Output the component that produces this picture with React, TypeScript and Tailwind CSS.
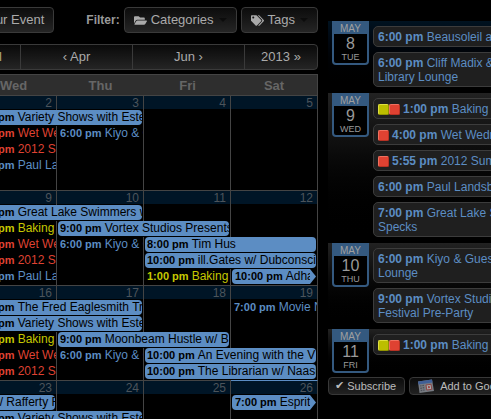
import React from "react";
import { FaFolderOpen, FaTags } from "react-icons/fa";

type Kind = "bar" | "arrow" | "blue" | "red" | "yellow";
type CalendarEvent = { time?: string; title: string; kind: Kind; span?: number };
type Week = { days: number[]; rows: (CalendarEvent | null)[][]; continued?: boolean };

const wet: CalendarEvent = { time: "4:00 pm", title: "Wet We", kind: "red" };
const summer: CalendarEvent = { time: "5:55 pm", title: "2012 S", kind: "red" };
const paul: CalendarEvent = { time: "6:00 pm", title: "Paul La", kind: "blue" };
const kiyo: CalendarEvent = { time: "6:00 pm", title: "Kiyo & G", kind: "blue" };
const baking: CalendarEvent = { time: "1:00 pm", title: "Baking", kind: "yellow" };
const variety: CalendarEvent = { time: "7:00 pm", title: "Variety Shows with Este", kind: "bar", span: 2 };

const weeks: Week[] = [
  {
    days: [2, 3, 4, 5],
    rows: [
      [variety, null, null],
      [wet, kiyo, null, null],
      [summer, null, null, null],
      [paul, null, null, null],
      [null, null, null, null],
    ],
  },
  {
    days: [9, 10, 11, 12],
    rows: [
      [{ time: "7:00 pm", title: "Great Lake Swimmers w", kind: "bar", span: 2 }, null, null],
      [baking, { time: "9:00 pm", title: "Vortex Studios Presents", kind: "bar", span: 2 }, null],
      [wet, kiyo, { time: "8:00 pm", title: "Tim Hus", kind: "bar", span: 2 }],
      [summer, null, { time: "10:00 pm", title: "ill.Gates w/ Dubconsci", kind: "bar", span: 2 }],
      [paul, null, baking, { time: "10:00 pm", title: "Adha", kind: "arrow" }],
    ],
  },
  {
    days: [16, 17, 18, 19],
    rows: [
      [
        { time: "8:00 pm", title: "The Fred Eaglesmith Tr", kind: "bar", span: 2 },
        null,
        { time: "7:00 pm", title: "Movie N", kind: "blue" },
      ],
      [variety, null, null],
      [baking, { time: "9:00 pm", title: "Moonbeam Hustle w/ B", kind: "bar", span: 2 }, null],
      [wet, kiyo, { time: "10:00 pm", title: "An Evening with the V", kind: "bar", span: 2 }],
      [summer, null, { time: "10:00 pm", title: "The Librarian w/ Naask", kind: "bar", span: 2 }],
    ],
  },
  {
    days: [23, 24, 25, 26],
    continued: true,
    rows: [
      [
        { title: "w/ Rafferty F", kind: "bar" },
        null,
        null,
        { time: "7:00 pm", title: "Esprit", kind: "arrow" },
      ],
      [variety, null, null],
      [null, null, null, null],
      [null, null, null, null],
      [null, null, null, null],
    ],
  },
];

const kindClass: Record<Kind, string> = {
  bar: "mx-px rounded bg-[#5c8dc3] pl-[2px] text-black",
  arrow:
    "mx-px rounded-l bg-[#5c8dc3] pl-[3px] pr-[6px] text-black [clip-path:polygon(0_0,calc(100%-6px)_0,100%_50%,calc(100%-6px)_100%,0_100%)]",
  blue: "pl-[3px] text-[#5c8dc3]",
  red: "pl-[3px] text-[#df4232]",
  yellow: "pl-[3px] text-[#c6c800]",
};

function EventLabel({ event }: { event: CalendarEvent }) {
  return (
    <div className={`h-[15px] overflow-hidden whitespace-nowrap text-xs leading-[15px] ${kindClass[event.kind]}`}>
      <div className={event.time ? "overflow-hidden" : "overflow-hidden pl-[18px]"}>
        {event.time && <b className="text-[11px]">{event.time} </b>}
        {event.title}
      </div>
    </div>
  );
}

function Calendar() {
  return (
    <table className="mt-1 w-full table-fixed border-separate border-spacing-0">
      <thead>
        <tr>
          {["Wed", "Thu", "Fri", "Sat"].map((d) => (
            <th
              key={d}
              scope="col"
              className="h-[21px] border-t border-[#444] bg-[#2e2e2e] p-0 pt-px text-[13px] leading-[19px] font-bold text-[#666] last:border-r"
            >
              {d}
            </th>
          ))}
        </tr>
      </thead>
      {weeks.map((week, w) => (
        <tbody key={w}>
          <tr>
            {week.days.map((day, i) => (
              <td
                key={day}
                className={`h-[15px] border-t border-r border-r-[#444] p-0 align-top ${
                  week.continued && i === 3 ? "border-t-[#5c8dc3]" : "border-t-[#444]"
                }`}
              >
                <div className="h-[13px] bg-[#001526] pr-1 text-right text-xs leading-[14px] text-[#4c545b]">{day}</div>
              </td>
            ))}
          </tr>
          {week.rows.map((row, r) => (
            <tr key={r}>
              {row.map((event, c) => (
                <td key={c} colSpan={event?.span ?? 1} className="h-4 border-r border-[#444] p-0 align-top">
                  {event && <EventLabel event={event} />}
                </td>
              ))}
            </tr>
          ))}
        </tbody>
      ))}
    </table>
  );
}

const buttonClass =
  "flex h-[26px] shrink-0 items-center rounded border border-[#3a3a3a] bg-linear-to-b from-[#0c0c0c] to-[#252525] px-[9px] text-[13px] whitespace-nowrap text-[#aaa]";

function Caret() {
  return (
    <span className="ml-[5px] h-0 w-0 border-x-4 border-t-4 border-x-transparent border-t-[#0c0c0c]" aria-hidden="true" />
  );
}

type AgendaItem = { time: string; lines: string[]; tags?: ("yellow" | "red")[] };
const agenda: { date: number; day: string; today?: boolean; items: AgendaItem[] }[] = [
  {
    date: 8,
    day: "TUE",
    today: true,
    items: [
      { time: "6:00 pm", lines: ["Beausoleil av"] },
      { time: "6:00 pm", lines: ["Cliff Madix &", "Library Lounge"] },
    ],
  },
  {
    date: 9,
    day: "WED",
    items: [
      { time: "1:00 pm", lines: ["Baking"], tags: ["yellow", "red"] },
      { time: "4:00 pm", lines: ["Wet Wedn"], tags: ["red"] },
      { time: "5:55 pm", lines: ["2012 Sum"], tags: ["red"] },
      { time: "6:00 pm", lines: ["Paul Landsb"] },
      { time: "7:00 pm", lines: ["Great Lake S", "Specks"] },
    ],
  },
  {
    date: 10,
    day: "THU",
    items: [
      { time: "6:00 pm", lines: ["Kiyo & Gues", "Lounge"] },
      { time: "9:00 pm", lines: ["Vortex Studi", "Festival Pre-Party"] },
    ],
  },
  { date: 11, day: "FRI", items: [{ time: "1:00 pm", lines: ["Baking"], tags: ["yellow", "red"] }] },
];

function Agenda() {
  return (
    <div>
      {agenda.map((d) => (
        <section
          key={d.date}
          className={`flex border-b border-black bg-linear-to-b to-black pl-1 ${
            d.today ? "from-[#001220]" : "from-[#222]"
          }`}
        >
          <div className="h-11 w-[37px] shrink-0 rounded-b bg-[#34597f] px-[2px] text-center">
            <div className="h-[13px] text-[10px] leading-[15px] text-[#a0a0a0]">MAY</div>
            <div className="h-[29px] rounded-b-[2px] bg-black pt-px text-[#999]">
              <div className="text-base leading-[17px]">{d.date}</div>
              <div className="text-[9px] leading-[11px]">{d.day}</div>
            </div>
          </div>
          <ul className="ml-1 flex flex-1 flex-col gap-[5px] py-[5px]">
            {d.items.map((item, i) => (
              <li
                key={i}
                className="rounded-[5px] border border-[#3c3c3c] bg-[#1f1f1f] px-1 pt-[3px] pb-[2px] text-xs leading-[14px] whitespace-nowrap text-[#5c8dc3]"
              >
                <a href="#event" className="block">
                  <span className="flex items-center">
                    {item.tags && (
                      <span className="mr-[3px] flex">
                        {item.tags.map((t) => (
                          <span
                            key={t}
                            className={`h-[11px] w-[11px] rounded-[2px] border ${
                              t === "red"
                                ? "border-t-[#f0705f] border-r-[#b83224] border-b-[#b83224] border-l-[#f0705f] bg-[#df4232]"
                                : "border-t-[#dfe040] border-r-[#929400] border-b-[#929400] border-l-[#dfe040] bg-[#bcbe00]"
                            }`}
                          />
                        ))}
                      </span>
                    )}
                    <span>
                      <b>{item.time}</b> {item.lines[0]}
                    </span>
                  </span>
                  {item.lines[1] && <span className="block">{item.lines[1]}</span>}
                </a>
              </li>
            ))}
          </ul>
        </section>
      ))}
    </div>
  );
}

function CalendarIcon() {
  return (
    <svg width="18" height="15" viewBox="0 0 18 15" aria-hidden="true">
      <path d="M1 2.5 15 .5l2 11.5-14.5 2z" fill="#777b82" />
      <path d="M1 2.5 15 .5l.5 3-14 2z" fill="#405f96" />
      <path d="M3 7l4-.6M3.3 9.3l4-.6M3.7 11.6l4-.6" stroke="#4c5058" strokeWidth="1.2" strokeDasharray="1.6 .8" />
      <path d="M9 6l5-.7.8 5-5 .7z" fill="#aaa" stroke="#8c4444" />
      <path d="M11 7.3l1.5-.2.4 2-1.6.2z" fill="#9c3434" />
    </svg>
  );
}

const smallButton =
  "flex h-[18px] shrink-0 items-center rounded border border-[#383838] bg-linear-to-b from-[#0c0c0c] to-[#222] text-[11px] whitespace-nowrap text-[#bbb]";

export default function App() {
  return (
    <div className="flex h-screen overflow-hidden bg-black font-['Liberation_Sans',Arial,sans-serif]">
      <main className="-ml-[30px] w-[348px] shrink-0 pt-[7px]">
        <div className="flex items-center justify-end gap-1">
          <button type="button" className={`${buttonClass} mr-7`}>
            Post Your Event
          </button>
          <span className="text-xs font-bold text-[#999]">Filter:</span>
          <button type="button" className={buttonClass}>
            <FaFolderOpen className="mr-1 h-[13px] w-[13px]" />
            Categories
            <Caret />
          </button>
          <button type="button" className={buttonClass}>
            <FaTags className="mr-1 h-[13px] w-[13px]" />
            Tags
            <Caret />
          </button>
        </div>
        <nav
          aria-label="Months"
          className="mt-[11px] grid h-[26px] grid-cols-[1fr_112px_112px_73px] rounded border border-[#3a3a3a] bg-linear-to-b from-[#0a0a0a] to-[#252525] text-[13px] text-[#aaa]"
        >
          <button type="button" className="pr-[18px] text-right text-[#b5ac78]">
            April
          </button>
          <button type="button" className="border-l border-[#3a3a3a]">‹ Apr</button>
          <button type="button" className="border-l border-[#3a3a3a]">Jun ›</button>
          <button type="button" className="border-l border-[#3a3a3a]">2013 »</button>
        </nav>
        <Calendar />
      </main>
      <aside className="ml-[10px] min-w-[220px] flex-1 pt-[21px]">
        <Agenda />
        <div className="mt-[3px] flex gap-1">
          <button type="button" className={`${smallButton} pr-2 pl-[6px]`}>
            <span className="mr-[3px] font-['DejaVu_Sans']">✔</span>
            Subscribe
          </button>
          <button type="button" className={`${smallButton} gap-[5px] px-[7px]`}>
            <CalendarIcon />
            Add to Google
          </button>
        </div>
      </aside>
    </div>
  );
}
